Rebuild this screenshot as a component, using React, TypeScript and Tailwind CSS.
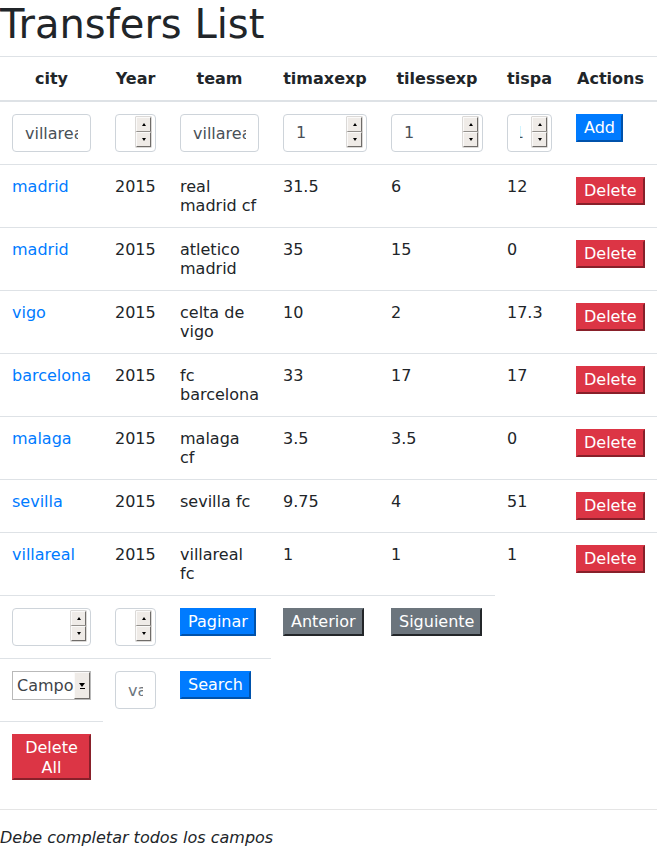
import React from "react";

interface Transfer {
  city: string;
  year: string;
  team: string;
  timaxexp: string;
  tilessexp: string;
  tispa: string;
}

const transfers: Transfer[] = [
  { city: "madrid", year: "2015", team: "real madrid cf", timaxexp: "31.5", tilessexp: "6", tispa: "12" },
  { city: "madrid", year: "2015", team: "atletico madrid", timaxexp: "35", tilessexp: "15", tispa: "0" },
  { city: "vigo", year: "2015", team: "celta de vigo", timaxexp: "10", tilessexp: "2", tispa: "17.3" },
  { city: "barcelona", year: "2015", team: "fc barcelona", timaxexp: "33", tilessexp: "17", tispa: "17" },
  { city: "malaga", year: "2015", team: "malaga cf", timaxexp: "3.5", tilessexp: "3.5", tispa: "0" },
  { city: "sevilla", year: "2015", team: "sevilla fc", timaxexp: "9.75", tilessexp: "4", tispa: "51" },
  { city: "villareal", year: "2015", team: "villareal fc", timaxexp: "1", tilessexp: "1", tispa: "1" },
];

const SpinHalf = ({ up }: { up: boolean }) => (
  <div className="flex h-[15px] items-center justify-center border border-t-[#fbfaf9] border-l-[#fbfaf9] border-r-[#6f6c69] border-b-[#6f6c69] bg-[#efebe7] shadow-[0_0_0_0.5px_#b8b4b0]">
    {up ? (
      <span className="h-0 w-0 border-x-[2px] border-b-[3px] border-x-transparent border-b-black" />
    ) : (
      <span className="h-0 w-0 border-x-[2px] border-t-[3px] border-x-transparent border-t-black" />
    )}
  </div>
);

const Spinner = () => (
  <div className="flex w-[15px] shrink-0 flex-col">
    <SpinHalf up />
    <SpinHalf up={false} />
  </div>
);

const NumberInput = ({ value, clip }: { value?: string; clip?: boolean }) => (
  <div className="flex h-[38px] w-full items-start rounded border border-[#ced4da] bg-white pl-3 pr-[4px] pt-[2px]">
    {clip ? (
      <span className="flex flex-1 overflow-hidden pt-[6px] text-[#495057]">
        <span className="flex w-[4px] justify-end overflow-hidden">
          <span>{value}</span>
        </span>
      </span>
    ) : (
      <span className="flex-1 overflow-hidden whitespace-nowrap pt-[6px] text-[#495057]">{value}</span>
    )}
    <Spinner />
  </div>
);

const TextInput = ({ value, placeholder }: { value?: string; placeholder?: string }) => (
  <input
    readOnly
    value={value}
    placeholder={placeholder}
    className="block h-[38px] w-full rounded border border-[#ced4da] bg-white px-3 text-[#495057] outline-none placeholder:text-[#6c757d]"
  />
);

const Btn = ({ children, color }: { children: React.ReactNode; color: "blue" | "red" | "gray" }) => {
  const cls =
    color === "blue"
      ? "border-[#007bff] bg-[#007bff]"
      : color === "red"
      ? "border-[#dc3545] bg-[#dc3545]"
      : "border-[#6c757d] bg-[#6c757d]";
  return (
    <button className={`h-[28px] border-2 [border-style:outset] px-[6px] leading-[24px] whitespace-nowrap text-white ${cls}`}>
      {children}
    </button>
  );
};

const Select = () => (
  <div className="flex h-[29px] w-full items-stretch border border-[#b9b9b9] bg-white">
    <span className="flex-1 overflow-hidden whitespace-nowrap pl-[4px] leading-[27px] text-[#3f4448]">Campo</span>
    <span className="flex w-[16px] flex-col items-center justify-center gap-[1px] border border-t-[#fbfaf9] border-l-[#fbfaf9] border-r-[#6f6c69] border-b-[#6f6c69] bg-[#efebe7]">
      <span className="h-0 w-0 border-x-[3.5px] border-t-[4px] border-x-transparent border-t-black" />
      <span className="h-px w-[5px] bg-black" />
    </span>
  </div>
);

const td = "border-t border-[#dee2e6] p-3 align-top";

export default function App() {
  return (
    <div className="w-[657px] bg-white text-base text-[#212529]" style={{ fontFamily: '"DejaVu Sans", sans-serif' }}>
      <h1 className="mb-2 text-[40px] font-medium leading-[48px]">Transfers List</h1>
      <table className="w-[657px] table-fixed border-collapse leading-[19px]">
        <colgroup>
          <col className="w-[103px]" />
          <col className="w-[65px]" />
          <col className="w-[103px]" />
          <col className="w-[108px]" />
          <col className="w-[116px]" />
          <col className="w-[69px]" />
          <col className="w-[93px]" />
        </colgroup>
        <thead>
          <tr>
            {["city", "Year", "team", "timaxexp", "tilessexp", "tispa", "Actions"].map((h) => (
              <th key={h} className="border-t border-b-2 border-[#dee2e6] p-3 text-center align-bottom font-bold">
                {h}
              </th>
            ))}
          </tr>
        </thead>
        <tbody>
          <tr>
            <td className="p-3 align-top">
              <TextInput value="villareal" />
            </td>
            <td className="p-3 align-top">
              <NumberInput />
            </td>
            <td className="p-3 align-top">
              <TextInput value="villareal" />
            </td>
            <td className="p-3 align-top">
              <NumberInput value="1" />
            </td>
            <td className="p-3 align-top">
              <NumberInput value="1" />
            </td>
            <td className="p-3 align-top">
              <NumberInput value="1" clip />
            </td>
            <td className="p-3 align-top">
              <Btn color="blue">Add</Btn>
            </td>
          </tr>
          {transfers.map((t, i) => (
            <tr key={i}>
              <td className={td}>
                <a className="text-[#007bff]">{t.city}</a>
              </td>
              <td className={td}>{t.year}</td>
              <td className={td}>{t.team}</td>
              <td className={td}>{t.timaxexp}</td>
              <td className={td}>{t.tilessexp}</td>
              <td className={td}>{t.tispa}</td>
              <td className={td}>
                <Btn color="red">Delete</Btn>
              </td>
            </tr>
          ))}
          <tr>
            <td className={td}>
              <NumberInput />
            </td>
            <td className={td}>
              <NumberInput />
            </td>
            <td className={td}>
              <Btn color="blue">Paginar</Btn>
            </td>
            <td className={td}>
              <Btn color="gray">Anterior</Btn>
            </td>
            <td className={td}>
              <Btn color="gray">Siguiente</Btn>
            </td>
          </tr>
          <tr>
            <td className={td}>
              <Select />
            </td>
            <td className={td}>
              <TextInput placeholder="valor" />
            </td>
            <td className={td}>
              <Btn color="blue">Search</Btn>
            </td>
          </tr>
          <tr>
            <td className={td}>
              <button className="w-full border-2 border-[#dc3545] bg-[#dc3545] px-[6px] pt-[2px] pb-0 leading-[20px] text-white [border-style:outset]">
                Delete All
              </button>
            </td>
          </tr>
        </tbody>
      </table>
      <hr className="mt-[17px] mb-4 border-t border-black/10" />
      <p className="italic leading-6">Debe completar todos los campos</p>
    </div>
  );
}
